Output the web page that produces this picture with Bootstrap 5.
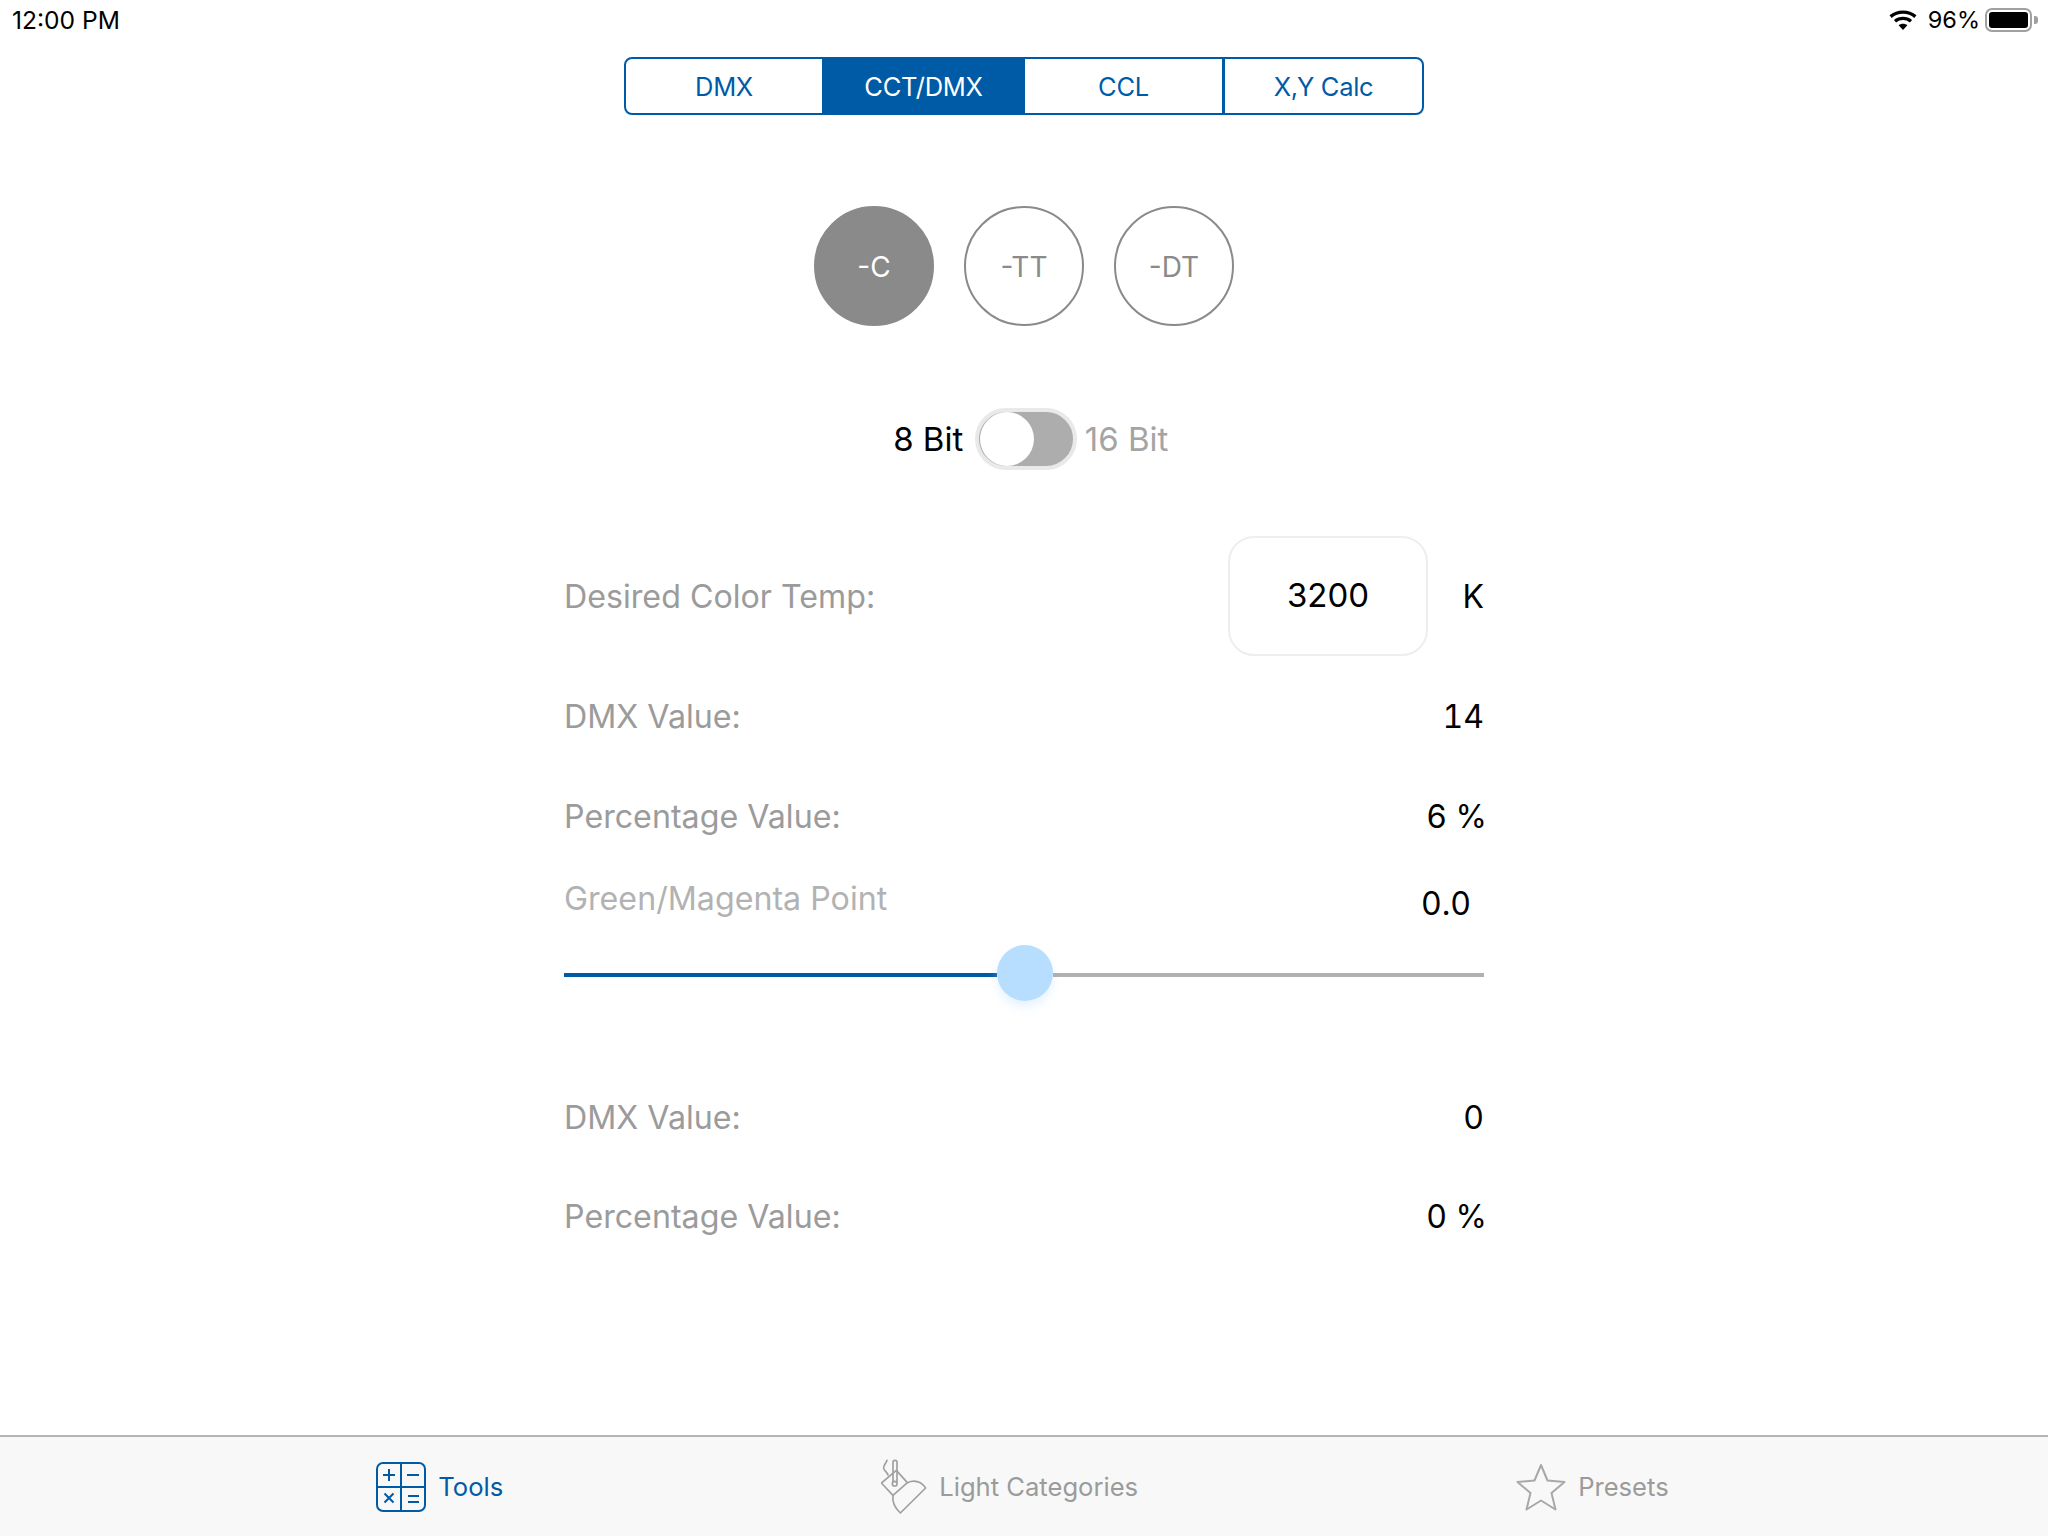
<!DOCTYPE html>
<html lang="en">
<head>
<meta charset="utf-8">
<title>CCT/DMX</title>
<link rel="stylesheet" href="https://cdn.jsdelivr.net/npm/bootstrap@5.3.0/dist/css/bootstrap.min.css">
<style>
html,body{height:100%;}
body{font-family:Inter,"Liberation Sans",sans-serif;background:#fff;color:#000;width:2048px;height:1536px;overflow:hidden;}
.app-shell{height:1536px;}
.status-row{height:40px;font-size:24.6px;padding:0 10px 0 12px;}
.status-pct{font-size:23.5px;}
.status-right{gap:11px;}
.batt{width:47px;height:24px;border:2px solid #a0a0a0;border-radius:7px;padding:2px;margin-left:-6px;}
.batt-fill{background:#000;border-radius:3px;height:100%;}
.batt-nub{width:4px;height:8px;background:#a0a0a0;border-radius:0 3px 3px 0;margin-left:-9px;}
.seg-wrap{margin-top:17px;}
.seg{width:800px;height:58px;}
.seg .btn{flex:none;width:201px;font-size:25.5px;letter-spacing:-.3px;line-height:1;color:#005ba6;background:#fff;border:2px solid #005ba6;border-radius:8px;padding:1px 0 0;box-shadow:none;}
.seg .btn:first-child{width:200px;}
.seg .btn.on{background:#005ba6;color:#fff;position:relative;z-index:1;}
.seg .btn:not(:last-child){border-top-right-radius:0;border-bottom-right-radius:0;}
.seg .btn:not(:first-child){border-top-left-radius:0;border-bottom-left-radius:0;}
.circles{margin-top:91px;gap:30px;}
.circ{width:120px;height:120px;border:2px solid #8a8a8a;color:#8a8a8a;font-size:28px;padding-top:2px;}
.circ.on{background:#8a8a8a;color:#fff;}
.bit-row{margin-top:82px;height:62px;font-size:33px;padding-top:1px;}
.bit-side{flex:1 1 0;}
.bit-left{text-align:right;padding-right:11.5px;}
.bit-right{padding-left:8px;color:#a4a4a4;}
.tog{width:102px;height:62px;background:#adadad;border:4px solid #e9e9e9;margin-top:-1px;padding-left:1px;}
.tog-knob{width:54px;height:54px;background:#fff;}
.form-area{width:920px;}
.lbl{font-size:32.2px;color:#9b9b9b;}
.lbl-light{color:#b2b2b2;}
.val{font-size:32px;font-variant-numeric:tabular-nums;}
.val-pct{margin-right:-3px;}
.temp-row{margin-top:66px;height:120px;}
.temp-row .lbl,.temp-row .temp-unit{padding-top:2px;}
.temp-box{width:200px;height:120px;border:2px solid #eeeeee;border-radius:26px;font-size:33px;}
.temp-unit{width:36px;margin-left:20px;text-align:right;}
.row-a{height:44px;margin-top:39px;}
.row-b{height:44px;margin-top:56px;}
.row-b.last-row{margin-top:55px;}
.gm-row{margin-top:36px;height:44px;align-items:flex-start;}
.gm-val{width:63px;padding-top:7px;line-height:44px;text-align:left;}
.slide{height:56px;margin-top:26px;}
.trk{height:4px;margin-top:4px;}
.trk-on{background:#005ba6;flex:0 0 433px;}
.trk-off{background:#b0b0b0;flex:1 1 0;}
.thumb{width:56px;height:56px;background:#b7deff;box-shadow:0 6px 10px rgba(183,222,255,.35);}
.row-a.gap-a{margin-top:95px;}
.tabs{margin-top:auto;height:101px;background:#f8f8f8;border-top:2px solid #b4b4b4;gap:378px;font-size:25.6px;color:#9b9b9b;padding-right:3px;}
.tab-item{gap:12px;}
.tab-item span{padding-top:2px;}
.tab-item.on{color:#005ba6;}
.tab-item svg{display:block;flex:none;}
</style>
</head>
<body>
<div class="app-shell d-flex flex-column">
  <div class="status-row d-flex justify-content-between align-items-center">
    <span>12:00 PM</span>
    <div class="status-right d-flex align-items-center">
      <svg width="28" height="20" viewBox="0 0 28 20"><g fill="none" stroke="#000" stroke-width="3.4"><path d="M1.6 6.6C8.6 .6 19.4 .6 26.4 6.6"/><path d="M6 11.2C10.6 7.4 17.4 7.4 22 11.2"/></g><path d="M9.6 15.2C12.2 13.2 15.8 13.2 18.4 15.2L14 20Z" fill="#000"/></svg>
      <span class="status-pct">96%</span>
      <div class="batt"><div class="batt-fill"></div></div>
      <div class="batt-nub"></div>
    </div>
  </div>

  <div class="seg-wrap d-flex justify-content-center">
    <div class="seg btn-group" role="group">
      <button type="button" class="btn">DMX</button>
      <button type="button" class="btn on">CCT/DMX</button>
      <button type="button" class="btn">CCL</button>
      <button type="button" class="btn">X,Y Calc</button>
    </div>
  </div>

  <div class="circles d-flex justify-content-center">
    <div class="circ on rounded-circle d-flex align-items-center justify-content-center">-C</div>
    <div class="circ rounded-circle d-flex align-items-center justify-content-center">-TT</div>
    <div class="circ rounded-circle d-flex align-items-center justify-content-center">-DT</div>
  </div>

  <div class="bit-row d-flex align-items-center">
    <span class="bit-side bit-left">8 Bit</span>
    <div class="tog rounded-pill d-flex align-items-center"><div class="tog-knob rounded-circle"></div></div>
    <span class="bit-side bit-right">16 Bit</span>
  </div>

  <div class="form-area mx-auto">
    <div class="temp-row d-flex align-items-center">
      <span class="lbl flex-grow-1">Desired Color Temp:</span>
      <div class="temp-box d-flex align-items-center justify-content-center">3200</div>
      <span class="val temp-unit">K</span>
    </div>
    <div class="row-a d-flex justify-content-between align-items-center">
      <span class="lbl">DMX Value:</span><span class="val">14</span>
    </div>
    <div class="row-b d-flex justify-content-between align-items-center">
      <span class="lbl">Percentage Value:</span><span class="val val-pct">6 %</span>
    </div>
    <div class="gm-row d-flex justify-content-between">
      <span class="lbl lbl-light">Green/Magenta Point</span>
      <div class="val gm-val">0.0</div>
    </div>
    <div class="slide d-flex align-items-center">
      <div class="trk trk-on"></div>
      <div class="thumb rounded-circle"></div>
      <div class="trk trk-off"></div>
    </div>
    <div class="row-a gap-a d-flex justify-content-between align-items-center">
      <span class="lbl">DMX Value:</span><span class="val">0</span>
    </div>
    <div class="row-b last-row d-flex justify-content-between align-items-center">
      <span class="lbl">Percentage Value:</span><span class="val val-pct">0 %</span>
    </div>
  </div>

  <div class="tabs d-flex justify-content-center align-items-center">
    <div class="tab-item on d-flex align-items-center">
      <svg width="50" height="50" viewBox="0 0 50 50" fill="none" stroke="#005ba6" stroke-width="2"><rect x="1" y="1" width="48" height="48" rx="6"/><path d="M25 1V49M1 25H49"/><path d="M13 7V19M7 13H19M31 13H43M8.500 31.500L17.500 40.500M17.500 31.500L8.500 40.500M32 34H43M32 40H43"/></svg>
      <span>Tools</span>
    </div>
    <div class="tab-item d-flex align-items-center">
      <svg width="46" height="56" viewBox="64 58 138 164" fill="none" stroke="#a0a0a0" stroke-width="5" stroke-linejoin="round" stroke-linecap="round"><path d="M110 90L65 128L100 165L143 127Z"/><path d="M143 127C165 118 185 125 198 143L122 218C105 202 97 185 100 165"/><path d="M100 124V66Q100 60 106 60Q112 60 112 66V124"/><circle cx="105" cy="130" r="7"/><path d="M82 60C78 72 70 76 72 84C74 92 82 94 85 104"/></svg>
      <span>Light Categories</span>
    </div>
    <div class="tab-item d-flex align-items-center">
      <svg width="50" height="48" viewBox="0 0 50 48" fill="none" stroke="#a8a8a8" stroke-width="2" stroke-linejoin="round"><path d="M25 2L31.500 17.500L48.500 19L35.500 30L39.500 46.500L25 37.500L10.500 46.500L14.500 30L1.500 19L18.500 17.500Z"/></svg>
      <span>Presets</span>
    </div>
  </div>
</div>
<script src="https://cdn.jsdelivr.net/npm/bootstrap@5.3.0/dist/js/bootstrap.bundle.min.js"></script>
</body>
</html>
